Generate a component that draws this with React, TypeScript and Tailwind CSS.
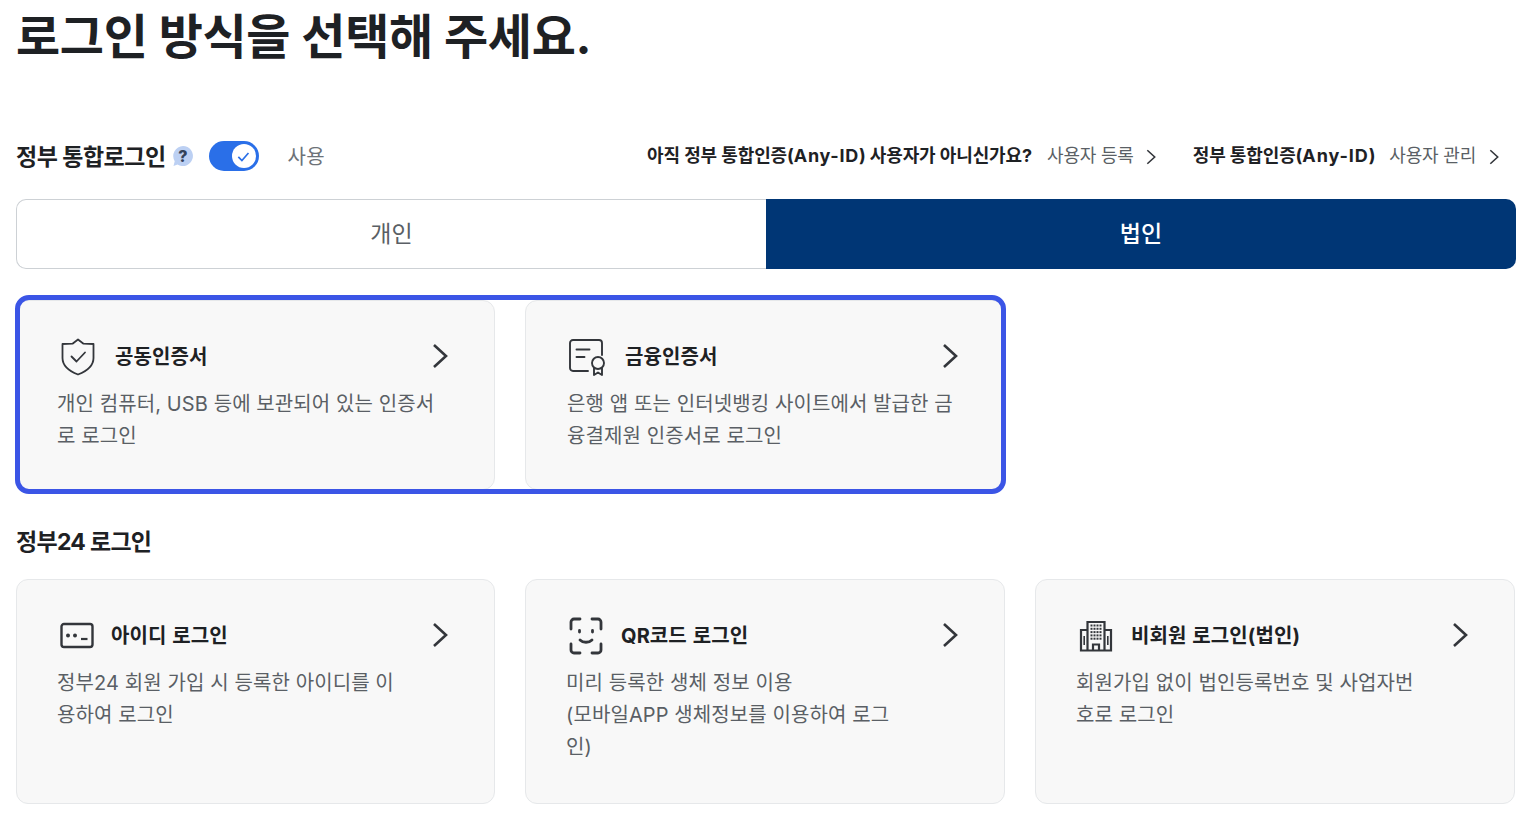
const font = { fontFamily: 'Inter, "Noto Sans CJK KR", "Noto Sans", sans-serif' };

function Chevron({ className }: { className: string }) {
  return (
    <svg viewBox="0 0 16 26" fill="none" stroke="currentColor" strokeWidth="2.6" className={className}>
      <path d="M2 2l12 11L2 24" />
    </svg>
  );
}

function ShieldIcon() {
  return (
    <svg viewBox="0 0 36 38" width="36" height="38" fill="none" stroke="#33363b" strokeWidth="1.8" strokeLinejoin="round" strokeLinecap="round" className="ml-[2px]">
      <path d="M18 1.500l5.500 4.200L33.500 6v14c0 7.500-6.500 13-15.500 16.500C9 33 2.500 27.500 2.500 20V6l10-.3z" />
      <path d="M11.500 18.500l5 5 8.500-9" />
    </svg>
  );
}

function CertIcon() {
  return (
    <svg viewBox="0 0 38 38" width="38" height="38" fill="none" stroke="#33363b" strokeWidth="1.900" strokeLinecap="round" strokeLinejoin="round">
      <path d="M20 33H5a3 3 0 0 1-3-3V5a3 3 0 0 1 3-3h26a3 3 0 0 1 3 3v12" />
      <path d="M8.500 11.500h13M8.500 19h8" />
      <circle cx="30" cy="25" r="6" />
      <path d="M26 30v7l4-2.500 4 2.500v-7" />
    </svg>
  );
}

function IdIcon() {
  return (
    <svg viewBox="0 0 34 28" width="34" height="28" fill="none">
      <rect x="1.500" y="2" width="31" height="23" rx="2.500" stroke="#33363b" strokeWidth="2.400" />
      <circle cx="8" cy="13.500" r="2" fill="#33363b" />
      <circle cx="15" cy="13.500" r="2" fill="#33363b" />
      <path d="M21 17h6.500" stroke="#33363b" strokeWidth="2.200" />
    </svg>
  );
}

function FaceIcon() {
  return (
    <svg viewBox="0 0 36 38" width="36" height="38" fill="none" stroke="#33363b" strokeWidth="2.800" strokeLinecap="round">
      <path d="M3 12V5a3 3 0 0 1 3-3h6M24 2h6a3 3 0 0 1 3 3v7M33 27v6a3 3 0 0 1-3 3h-6M12 36H6a3 3 0 0 1-3-3v-6" />
      <path d="M11.500 13.500v1.500M24.500 13.500v1.500" />
      <path d="M12 23c3 3 9 3 12 0" />
    </svg>
  );
}

function BuildingIcon() {
  const dots: number[][] = [];
  for (let r = 0; r < 5; r++) for (let c = 0; c < 4; c++) dots.push([12.500 + c * 3, 5.500 + r * 3.300]);
  return (
    <svg viewBox="0 0 34 32" width="34" height="32" fill="none" stroke="#33363b" strokeWidth="2.200">
      <path d="M8.500 30.500V2h17v28.500" />
      <path d="M8.500 10H2v20.500h30V10h-6.500" />
      <path d="M14 30.500v-6h6v6" />
      <path d="M5.200 16v9M28.800 16v9" strokeWidth="1.600" />
      {dots.map(([x, y]) => (
        <rect key={`${x}-${y}`} x={x - 1} y={y - 1} width="2" height="2" fill="#33363b" stroke="none" />
      ))}
    </svg>
  );
}

function LoginCard({ icon, title, gap, lines, className }: { icon: React.ReactNode; title: string; gap: string; lines: string[]; className: string }) {
  return (
    <div className={`rounded-[12px] border border-[#e6e8ea] bg-[#f8f8f8] pt-[36px] pr-[46px] ${className}`}>
      <div className="flex h-[40px] items-center justify-between">
        <div className={`flex items-center ${gap}`}>
          <span className="flex w-[40px] shrink-0 items-center justify-center">{icon}</span>
          <span className="text-[20px] font-bold tracking-[0.1px] [word-spacing:1px] text-[#1e2124]">{title}</span>
        </div>
        <Chevron className="-mt-[2px] h-[26px] w-[16px] text-[#33363b]" />
      </div>
      <div className="mt-[11px] text-[20px] leading-[32px] tracking-[0.1px] text-[#5a5f65]">
        {lines.map((l) => (
          <div key={l} className="whitespace-nowrap">{l}</div>
        ))}
      </div>
    </div>
  );
}

export default function App() {
  return (
    <div style={font} className="h-[816px] w-[1525px] overflow-hidden bg-white pl-[16px] pr-[9px]">
      <h1 className="h-[71px] pt-[3px] text-[48px] leading-[68px] font-bold tracking-[-0.3px] text-[#1e2124]">로그인 방식을 선택해 주세요.</h1>

      <div className="mt-[67px] flex h-[36px] items-center">
        <span className="mt-[2px] text-[23px] font-bold tracking-[-0.5px] text-[#1e2124]">정부 통합로그인</span>
        <svg viewBox="0 0 22 22" width="22" height="22" className="ml-[6px]">
          <path d="M11 1a10 10 0 1 1-5.500 18.400L1.500 21l1.200-4.800A10 10 0 0 1 11 1z" fill="#bcd0f3" />
          <text x="11" y="16.500" textAnchor="middle" fontSize="16" fontWeight="800" fill="#33425a">?</text>
        </svg>
        <span className="ml-[15px] flex h-[30px] w-[50px] items-center justify-end rounded-full bg-[#2a6fe8] pr-[3px]">
          <span className="flex h-[24px] w-[24px] items-center justify-center rounded-full bg-white">
            <svg viewBox="0 0 16 16" width="15" height="15" fill="none" stroke="#2a6fe8" strokeWidth="1.800"><path d="M2.500 8.500l3.800 3.800 7-8" /></svg>
          </span>
        </span>
        <span className="mt-[2px] ml-[29px] text-[20px] tracking-[0.2px] text-[#6d7278]">사용</span>

        <div className="-mt-[1px] ml-auto flex items-center pr-[17px]">
          <span className="text-[18px] font-bold tracking-[-0.1px] text-[#1e2124]">
            아직 정부 통합인증(<span className="tracking-[0.7px]">Any-ID</span>) 사용자가 아니신가요?
          </span>
          <span className="ml-[15px] text-[18px] tracking-[-0.2px] text-[#5a5f65]">사용자 등록</span>
          <Chevron className="mt-[3px] ml-[12px] h-[16px] w-[10px] text-[#33363b]" />
          <span className="ml-[37px] text-[18px] font-bold tracking-[-0.1px] text-[#1e2124]">
            정부 통합인증(<span className="tracking-[0.9px]">Any-ID</span>)
          </span>
          <span className="ml-[14px] text-[18px] tracking-[-0.2px] text-[#5a5f65]">사용자 관리</span>
          <Chevron className="mt-[3px] ml-[13px] h-[16px] w-[10px] text-[#33363b]" />
        </div>
      </div>

      <div className="mt-[25px] flex h-[70px] w-[1500px]">
        <div className="flex w-[750px] items-center justify-center rounded-l-[10px] border border-r-0 border-[#cdd1d5] text-[23px] text-[#5a5f65]">개인</div>
        <div className="flex w-[750px] items-center justify-center rounded-r-[10px] bg-[#003675] text-[23px] font-medium text-white">법인</div>
      </div>

      <div className="relative mt-[31px] flex h-[190px] w-[989px] gap-[30px]">
        <LoginCard className="w-[479px] pl-[40px]" gap="gap-[18px]" icon={<ShieldIcon />} title="공동인증서" lines={["개인 컴퓨터, USB 등에 보관되어 있는 인증서", "로 로그인"]} />
        <LoginCard className="w-[480px] pl-[41px]" gap="gap-[18px]" icon={<CertIcon />} title="금융인증서" lines={["은행 앱 또는 인터넷뱅킹 사이트에서 발급한 금", "융결제원 인증서로 로그인"]} />
        <div className="pointer-events-none absolute -top-[5px] -right-[1px] -bottom-[4px] -left-[1px] rounded-[14px] border-[5px] border-[#3b55e6]" />
      </div>

      <h2 className="mt-[31px] h-[40px] text-[23px] leading-[42px] font-bold tracking-[-0.7px] text-[#1e2124]">정부24 로그인</h2>

      <div className="mt-[18px] grid h-[225px] w-[1499px] grid-cols-[479px_480px_480px] gap-[30px]">
        <LoginCard className="pl-[40px]" gap="gap-[14px]" icon={<IdIcon />} title="아이디 로그인" lines={["정부24 회원 가입 시 등록한 아이디를 이", "용하여 로그인"]} />
        <LoginCard className="pl-[40px]" gap="gap-[15px]" icon={<FaceIcon />} title="QR코드 로그인" lines={["미리 등록한 생체 정보 이용", "(모바일APP 생체정보를 이용하여 로그", "인)"]} />
        <LoginCard className="pl-[40px]" gap="gap-[15px]" icon={<BuildingIcon />} title="비회원 로그인(법인)" lines={["회원가입 없이 법인등록번호 및 사업자번", "호로 로그인"]} />
      </div>
    </div>
  );
}
